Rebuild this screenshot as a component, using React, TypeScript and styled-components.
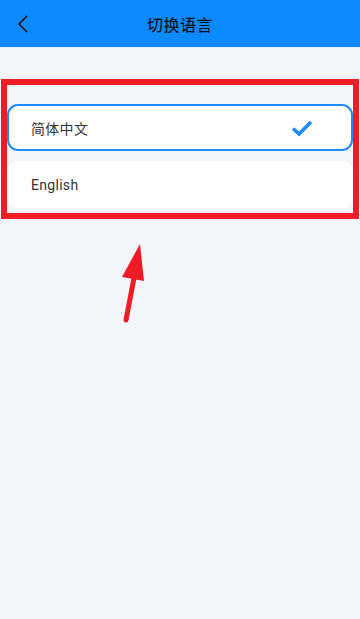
import React, { useState } from 'react'
import styled, { createGlobalStyle } from 'styled-components'

const GlobalStyle = createGlobalStyle`
    html, body {
        margin: 0;
        padding: 0;
        background: #f2f5fa;
    }
    body {
        font-family: Roboto, "Noto Sans CJK SC", sans-serif;
    }
`

const Screen = styled.div`
    position: relative;
    width: 360px;
    height: 619px;
    background: #f2f5fa;
    overflow: hidden;
`

const Header = styled.div`
    height: 47px;
    background: #0b8bff;
    display: grid;
    grid-template-columns: 1fr auto 1fr;
    align-items: center;
    padding: 0 10px;
    border-bottom: 1px solid #e6eefa;
`

const BackButton = styled.button`
    justify-self: start;
    width: 26px;
    height: 30px;
    padding: 0;
    border: none;
    background: transparent;
    display: flex;
    align-items: center;
    justify-content: center;
`

const Title = styled.div`
    font-family: "Noto Sans CJK SC", sans-serif;
    font-size: 16px;
    color: #111;
    letter-spacing: 0.5px;
    -webkit-text-stroke: 0.2px #111;
`

const List = styled.div`
    display: flex;
    flex-direction: column;
    gap: 10px;
    padding: 56px 7px 0 7px;
`

const Option = styled.div<{ $active: boolean }>`
    height: 47px;
    box-sizing: border-box;
    background: #fff;
    border-radius: 11px;
    border: 2px solid ${p => (p.$active ? '#1e8cff' : 'transparent')};
    display: flex;
    align-items: center;
    justify-content: space-between;
    padding: 0 38px 0 22px;
`

const OptionLabel = styled.span`
    font-family: Roboto, "Noto Sans CJK SC", sans-serif;
    font-size: 14px;
    color: #333;
    letter-spacing: 0.3px;
`

const Highlight = styled.div`
    position: absolute;
    left: 1px;
    top: 79px;
    width: 358px;
    height: 140px;
    box-sizing: border-box;
    border: 6px solid #ee1c25;
    pointer-events: none;
`

const Arrow = styled.svg`
    position: absolute;
    left: 110px;
    top: 240px;
`

const languages = ['简体中文', 'English']

const App = () => {
    const [selected, setSelected] = useState(0)

    return (
        <>
            <GlobalStyle />
            <Screen>
                <Header>
                    <BackButton>
                        <svg width="14" height="20" viewBox="0 0 14 20">
                            <path d="M11 2 L3 10 L11 18" fill="none" stroke="#111" strokeWidth="1.6" />
                        </svg>
                    </BackButton>
                    <Title>切换语言</Title>
                </Header>
                <List>
                    {languages.map((lang, i) => (
                        <Option key={lang} $active={selected === i} onClick={() => setSelected(i)}>
                            <OptionLabel>{lang}</OptionLabel>
                            {selected === i && (
                                <svg width="22" height="18" viewBox="0 0 22 18">
                                    <path d="M2 9.5 L8 15 L20 3" fill="none" stroke="#1e8cff" strokeWidth="3.6" />
                                </svg>
                            )}
                        </Option>
                    ))}
                </List>
                <Highlight />
                <Arrow width="40" height="90" viewBox="0 0 40 90">
                    <path d="M16 80 L24 38" stroke="#ee1c25" strokeWidth="5" strokeLinecap="round" fill="none" />
                    <polygon points="30,4 12,37 34,41" fill="#ee1c25" />
                </Arrow>
            </Screen>
        </>
    )
}

export default App
